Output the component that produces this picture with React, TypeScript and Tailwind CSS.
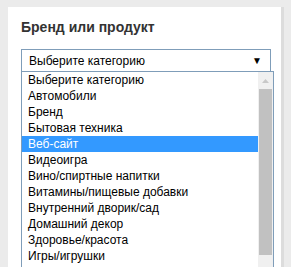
import React from "react";

const OPTIONS = [
  "Выберите категорию",
  "Автомобили",
  "Бренд",
  "Бытовая техника",
  "Веб-сайт",
  "Видеоигра",
  "Вино/спиртные напитки",
  "Витамины/пищевые добавки",
  "Внутренний дворик/сад",
  "Домашний декор",
  "Здоровье/красота",
  "Игры/игрушки",
];

export default function App() {
  const selected = 4;
  return (
    <div
      className="h-[267px] w-[291px] overflow-hidden bg-[#ebebeb] pl-[8px] pt-[7px]"
      style={{ fontFamily: '"Liberation Sans", Arial, sans-serif' }}
    >
      <div className="h-[300px] w-[276px] border-r-[3px] border-[#dcdcdc] bg-white pl-[13px] pt-[11px]">
        <h2 className="text-[14px] font-bold leading-[18px] text-[#333]">Бренд или продукт</h2>

        <div className="relative mt-[13px] w-[250px]">
          {/* select */}
          <div className="flex h-[23px] items-center justify-between border border-[#7f9db9] bg-white pl-[7px] pr-[8px] text-[12px] text-black">
            <span>Выберите категорию</span>
            <span className="text-[10px]">▼</span>
          </div>

          {/* open list */}
          <div className="absolute left-0 top-[22px] flex h-[220px] w-[253px] border border-[#7f9db9] bg-white">
            <ul className="w-[236px] text-[12px] text-black">
              {OPTIONS.map((o, i) => (
                <li
                  key={o}
                  className={`h-[16px] pl-[6px] leading-[16px] ${
                    i === selected ? "bg-[#3399ff] text-white" : ""
                  }`}
                >
                  {o}
                </li>
              ))}
            </ul>
            <div className="flex w-[15px] flex-col bg-[#f0f0f0]">
              <div className="flex h-[17px] items-center justify-center">
                <svg width="7" height="4" viewBox="0 0 7 4">
                  <path d="M0 4 L3.5 0 L7 4 Z" fill="#c8c8c8" />
                </svg>
              </div>
              <div className="mx-[1px] h-[166px] bg-[#c1c1c1]" />
            </div>
          </div>
        </div>
      </div>
    </div>
  );
}
